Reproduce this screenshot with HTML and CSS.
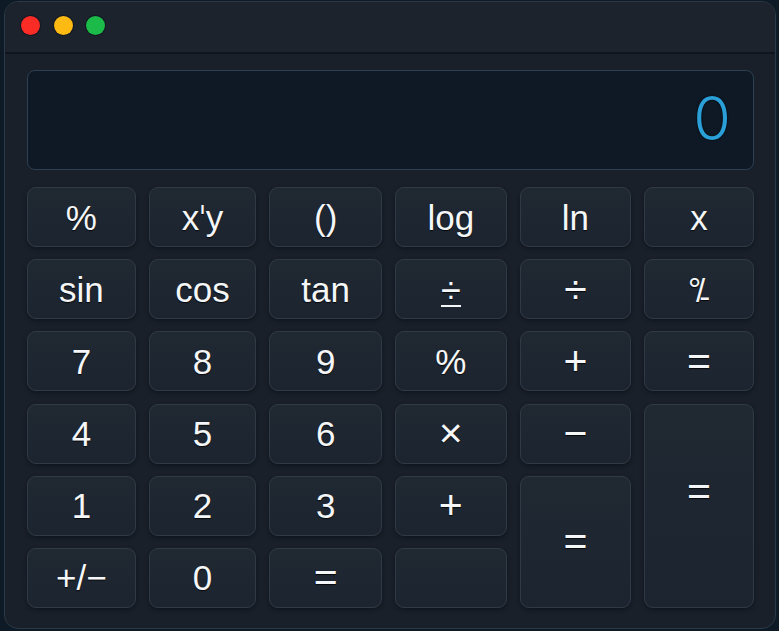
FILE: index.html
```html
<!DOCTYPE html>
<html lang="en">
<head>
<meta charset="utf-8">
<title>Calculator</title>
<link rel="stylesheet" href="styles.css">
</head>
<body>
<div class="window">
  <div class="titlebar">
    <span class="dot red"></span>
    <span class="dot yellow"></span>
    <span class="dot green"></span>
  </div>
  <div class="content">
    <div class="display"><span class="value">0</span></div>
    <div class="keys">
      <button class="key">%</button>
      <button class="key">x<span class="tick">ı</span>y</button>
      <button class="key">()</button>
      <button class="key">log</button>
      <button class="key">ln</button>
      <button class="key">x</button>

      <button class="key">sin</button>
      <button class="key">cos</button>
      <button class="key">tan</button>
      <button class="key divkey"><span class="divu">÷</span></button>
      <button class="key op">÷</button>
      <button class="key pm"><span class="deg">°</span><span class="sl">/</span><span class="dash">-</span></button>

      <button class="key">7</button>
      <button class="key">8</button>
      <button class="key">9</button>
      <button class="key">%</button>
      <button class="key op">+</button>
      <button class="key op">=</button>

      <button class="key">4</button>
      <button class="key">5</button>
      <button class="key">6</button>
      <button class="key op">×</button>
      <button class="key op">−</button>
      <button class="key op tall3">=</button>

      <button class="key">1</button>
      <button class="key">2</button>
      <button class="key">3</button>
      <button class="key op">+</button>
      <button class="key op tall2">=</button>

      <button class="key">+/−</button>
      <button class="key">0</button>
      <button class="key op">=</button>
      <button class="key"></button>
    </div>
  </div>
</div>
</body>
</html>
```
FILE: styles.css
```css
* { box-sizing: border-box; }

html, body {
  margin: 0;
  padding: 0;
  background: #0e1a26;
  font-family: "Liberation Sans", Arial, sans-serif;
}

body {
  padding: 1px 3px 2px 4px;
}

.window {
  width: 772px;
  height: 628px;
  border: 1px solid #2b3846;
  border-radius: 14px;
  background: #19202a;
  overflow: hidden;
  display: flex;
  flex-direction: column;
}

.titlebar {
  height: 52px;
  flex: none;
  background: #1d232c;
  border-bottom: 2px solid #10151b;
  display: flex;
  align-items: center;
  gap: 13.5px;
  padding-left: 16px;
  padding-bottom: 3px;
}

.dot {
  width: 19px;
  height: 19px;
  border-radius: 50%;
  box-shadow: 0 0 0 1px rgba(10, 14, 30, 0.6);
}
.red { background: #fb2b26; }
.yellow { background: #fdba12; }
.green { background: #1cba48; }

.content {
  flex: 1;
  padding: 16px 21px 20px 22px;
  display: flex;
  flex-direction: column;
  gap: 17px;
}

.display {
  height: 100px;
  flex: none;
  border: 1px solid #2d4155;
  border-radius: 8px;
  background: #0e1925;
  display: flex;
  align-items: center;
  justify-content: flex-end;
  padding-right: 22px;
}

.value {
  font-family: Inter, "Liberation Sans", sans-serif;
  color: #2a9fd8;
  font-size: 61px;
  font-weight: 300;
  line-height: 1;
  text-shadow: 0 0 2px #000;
  transform: translateY(-2px);
}

.keys {
  display: grid;
  grid-template-columns: 109fr 108fr 113fr 112fr 112fr 110fr;
  grid-auto-rows: 60px;
  column-gap: 12.8px;
  row-gap: 12.2px;
}

.key {
  font-family: "Liberation Sans", Arial, sans-serif;
  font-size: 35px;
  font-weight: 400;
  color: #f4f6f8;
  background: linear-gradient(#202832, #1c2430);
  border: 1px solid #303a46;
  border-radius: 9px;
  box-shadow: 0 2px 4px rgba(0, 0, 0, 0.35);
  text-shadow: 0 1px 1px rgba(0, 0, 0, 0.8);
  display: flex;
  align-items: center;
  justify-content: center;
  padding: 0;
  margin: 0;
  line-height: 1;
}

.tick {
  display: inline-block;
  font-size: 16px;
  font-weight: 700;
  transform: translateY(-8px);
  margin: 0 1px 0 1px;
}

.op { font-size: 41px; }

.divkey { font-size: 36px; }

.divu {
  display: inline-block;
  line-height: 0.75;
  border-bottom: 2.5px solid #f4f6f8;
  padding-bottom: 1px;
  transform: translateY(3px);
}

.pm {
  font-size: 33px;
  padding-top: 3px;
}

.deg {
  display: inline-block;
  transform: translateY(-1px);
}

.sl {
  display: inline-block;
  margin-left: -5px;
}

.dash {
  display: inline-block;
  margin-left: -6px;
  transform: translateY(6px);
}

.tall3 {
  grid-column: 6;
  grid-row: 4 / span 3;
  padding-bottom: 28px;
}

.tall2 {
  grid-column: 5;
  grid-row: 5 / span 2;
}
```
